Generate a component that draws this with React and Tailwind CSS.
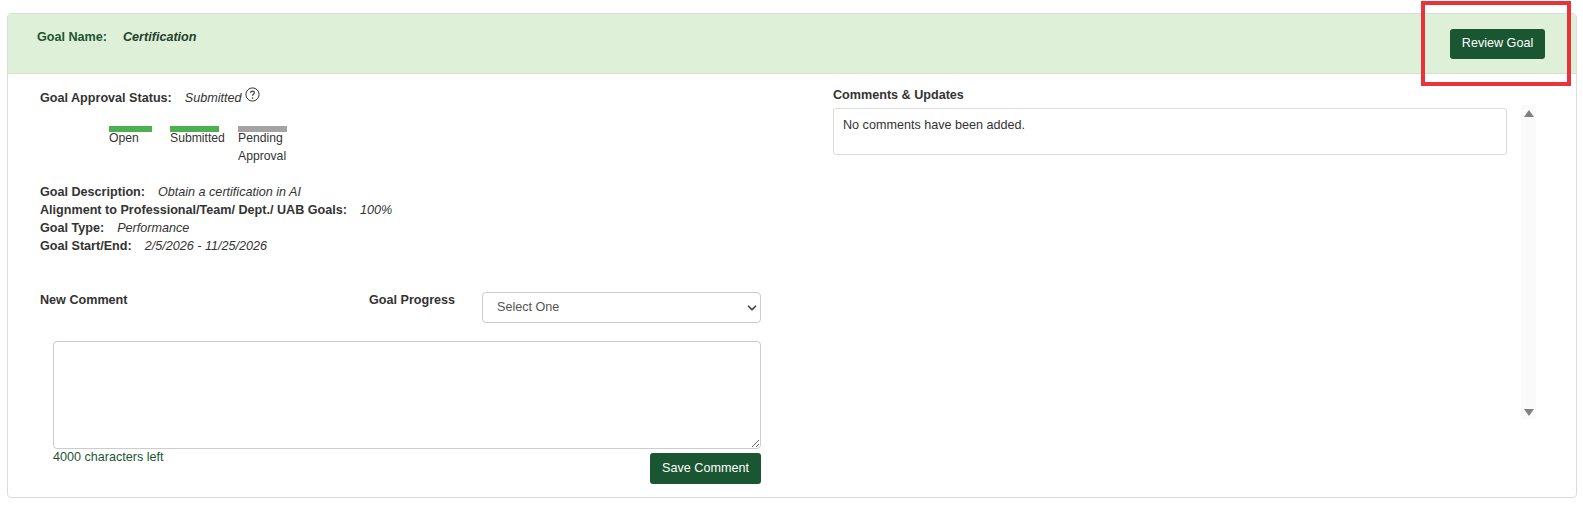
import { ChevronDown } from 'lucide-react';

const font = { fontFamily: '"Liberation Sans", Arial, sans-serif' };

const steps = [
  { label: 'Open', width: 'w-[43px]', bar: 'bg-[#4caf50]', gap: 'mr-[18px]' },
  { label: 'Submitted', width: 'w-[49px]', bar: 'bg-[#4caf50]', gap: 'mr-[19px]' },
  { label: 'Pending Approval', width: 'w-[49px]', bar: 'bg-[#a3a3a3]', gap: '' },
];

const details = [
  { label: 'Goal Description:', value: 'Obtain a certification in AI' },
  { label: 'Alignment to Professional/Team/ Dept./ UAB Goals:', value: '100%' },
  { label: 'Goal Type:', value: 'Performance' },
  { label: 'Goal Start/End:', value: '2/5/2026 - 11/25/2026' },
];

const App = () => {
  return (
    <div className="relative w-[1583px] h-[519px] bg-white overflow-hidden pt-[13px] pl-[7px] text-[12.6px] leading-[18px] text-[#333]">
      <div className="w-[1570px] h-[485px] border border-[#dcdcdc] rounded-[4px] bg-white" style={font}>
        <div className="flex justify-between h-[60px] bg-[#dff0d8] border-b border-[#d3e6cb] rounded-t-[4px] pl-[29px] pr-[31px] pt-[14px]">
          <div className="flex font-bold">
            <span className="text-[#1b5632] w-[86px]">Goal Name:</span>
            <span className="italic text-[#24402a]">Certification</span>
          </div>
          <button className="w-[95px] h-[30px] mt-[1px] pb-[2px] bg-[#1b5632] text-white rounded-[3px]">Review Goal</button>
        </div>

        <div className="flex">
          <div className="w-[785px] pl-[32px] pt-[15px]">
            <div className="flex items-start h-[18px]">
              <span className="font-bold">Goal Approval Status:</span>
              <span className="italic ml-[13px]">Submitted</span>
              <svg className="ml-[3px] -mt-[2px]" width="15" height="15" viewBox="0 0 15 15" fill="none">
                <circle cx="7.5" cy="7.5" r="6.6" stroke="#333" strokeWidth="1" />
                <path d="M5.6 6c0-1.2.9-1.9 1.9-1.9s1.9.7 1.9 1.7c0 1.5-1.9 1.5-1.9 3" stroke="#333" strokeWidth="1.1" />
                <circle cx="7.5" cy="11" r=".8" fill="#333" />
              </svg>
            </div>

            <div className="flex ml-[69px] mt-[19px] h-[54px]">
              {steps.map((step) => (
                <div key={step.label} className={`${step.width} ${step.gap}`}>
                  <div className={`h-[6px] ${step.bar}`} />
                  <div className="text-[12.2px] w-[60px] -mt-[3px]">{step.label}</div>
                </div>
              ))}
            </div>

            <div className="mt-[3px]">
              {details.map((row) => (
                <div key={row.label}>
                  <span className="font-bold">{row.label}</span>
                  <span className="italic ml-[13px]">{row.value}</span>
                </div>
              ))}
            </div>

            <div className="flex mt-[37px] h-[31px]">
              <span className="font-bold w-[329px] -mt-[1px]">New Comment</span>
              <span className="font-bold w-[113px] -mt-[1px]">Goal Progress</span>
              <div className="relative w-[279px] h-[31px] border border-[#cccccc] rounded-[4px] pl-[14px] pt-[5px] text-[#555]">
                Select One
                <ChevronDown className="absolute right-[1px] top-[8px] w-[14px] h-[14px] text-[#444]" strokeWidth={3} />
              </div>
            </div>

            <div className="ml-[13px] w-[708px] mt-[18px]">
              <textarea className="block w-full h-[108px] border border-[#cccccc] rounded-[4px] outline-none" />
              <div className="flex justify-between items-start">
                <span className="text-[#1b5632] -mt-[1px]">4000 characters left</span>
                <button className="w-[111px] h-[31px] mt-[4px] pb-[2px] bg-[#1b5632] text-white rounded-[3px]">Save Comment</button>
              </div>
            </div>
          </div>

          <div className="pl-[40px] pt-[12px]">
            <div className="font-bold mb-[4px]">Comments &amp; Updates</div>
            <div className="flex">
              <div className="w-[674px] h-[47px] border border-[#dcdcdc] rounded-[3px] pl-[9px] pt-[7px]">No comments have been added.</div>
              <div className="flex flex-col justify-between items-center w-[15px] h-[314px] ml-[14px] -mt-[3px] bg-[#fafafa] pt-[5px] pb-[3px]">
                <div className="w-0 h-0 border-x-[5px] border-x-transparent border-b-[7px] border-b-[#808080]" />
                <div className="w-0 h-0 border-x-[5px] border-x-transparent border-t-[7px] border-t-[#808080]" />
              </div>
            </div>
          </div>
        </div>
      </div>

      {/* red highlight drawn over the screenshot */}
      <div className="absolute left-[1421px] top-[1px] w-[150px] h-[85px] border-[4px] border-[#e8333a]" />
    </div>
  );
};

export default App;
